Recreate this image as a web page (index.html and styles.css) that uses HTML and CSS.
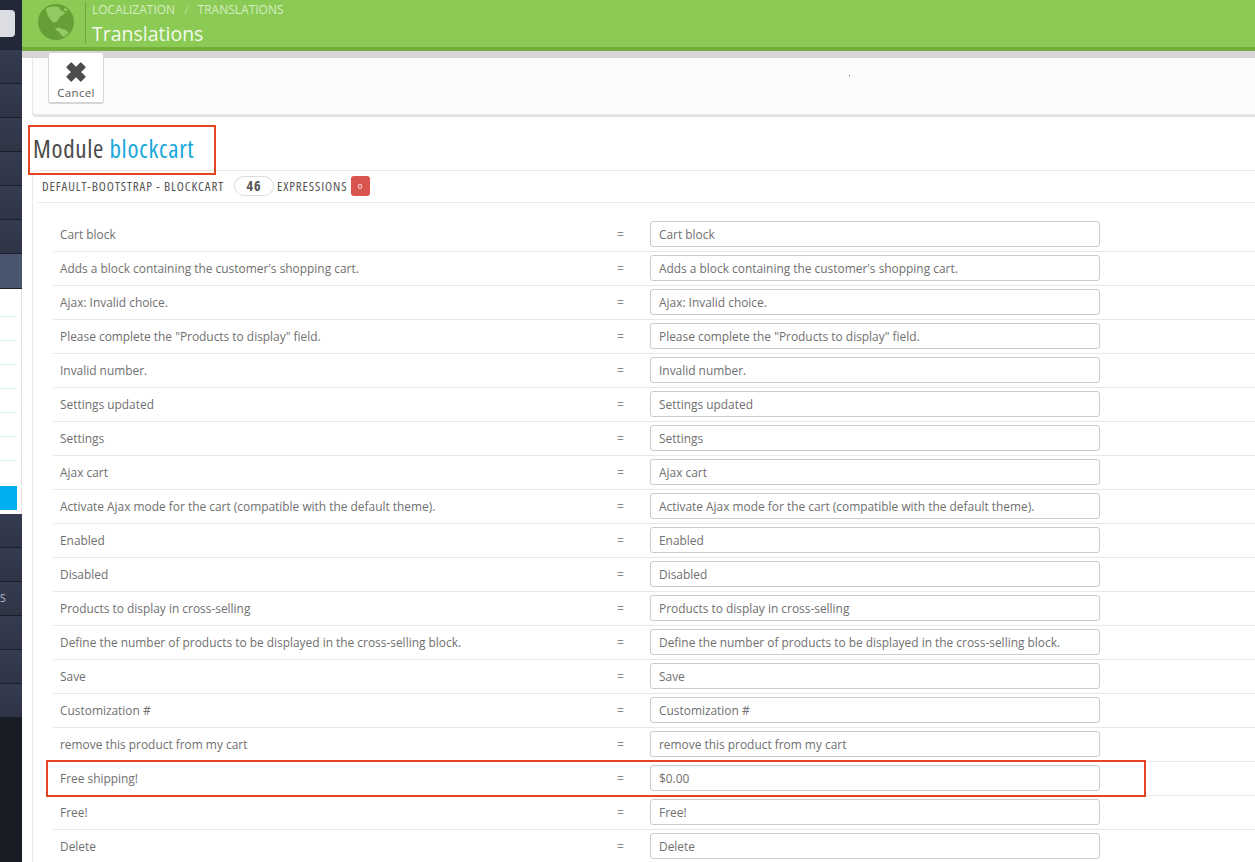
FILE: index.html
```html
<!DOCTYPE html>
<html lang="en">
<head>
<meta charset="utf-8">
<title>Translations</title>
<link rel="stylesheet" href="styles.css">
</head>
<body>
<div class="app">
  <nav class="sidebar">
    <div class="side-top"><div class="side-search"></div></div>
    <div class="side-item"></div>
    <div class="side-item"></div>
    <div class="side-item"></div>
    <div class="side-item"></div>
    <div class="side-item"></div>
    <div class="side-item"></div>
    <div class="side-item side-active"></div>
    <div class="side-sub">
      <div class="sub-item sub-first"></div>
      <div class="sub-item"></div>
      <div class="sub-item"></div>
      <div class="sub-item"></div>
      <div class="sub-item"></div>
      <div class="sub-item"></div>
      <div class="sub-item"></div>
      <div class="sub-current"></div>
    </div>
    <div class="side-item"></div>
    <div class="side-item"></div>
    <div class="side-item side-label">S</div>
    <div class="side-item"></div>
    <div class="side-item"></div>
    <div class="side-item"></div>
    <div class="side-foot"></div>
  </nav>
  <main class="main">
    <header class="page-head">
      <svg class="globe" viewBox="0 0 36 36" width="36" height="36" aria-hidden="true">
        <circle cx="18" cy="18" r="18" fill="#659f35"/>
        <path d="M8 4.5C12 2.5 17 2 21 3.2L22 5.5 27.5 8.5 25 11 22 12.5 20.5 15.5 18.5 18 15 18.8 12.5 15.5 10 12 8.5 8Z" fill="#93ca62"/>
        <path d="M17 24.3L21 23.5 24 24.8 28 26 31 29 26 33 23.5 31.5 21.5 28.5 18.5 26.5Z" fill="#93ca62"/>
        <path d="M27 3.8L30 6 28 7.5 25.5 5.5Z" fill="#93ca62"/>
      </svg>
      <div class="head-text">
        <div class="crumbs"><span>LOCALIZATION</span><span class="crumb-sep">/</span><span>TRANSLATIONS</span></div>
        <h1 class="page-title">Translations</h1>
      </div>
    </header>
    <section class="toolbar">
      <button class="cancel" type="button">
        <svg viewBox="2 2 16 16" width="20" height="20" aria-hidden="true"><path d="M2.8 6.2L6.2 2.8 10 6.6 13.8 2.8 17.2 6.2 13.4 10 17.2 13.8 13.8 17.2 10 13.4 6.2 17.2 2.8 13.8 6.6 10Z" fill="#4d4d4d" stroke="#4d4d4d" stroke-width="1" stroke-linejoin="round"/></svg>
        <span>Cancel</span>
      </button>
      <i class="speck"></i>
    </section>
    <h2 class="module-title">Module <span class="module-name">blockcart</span></h2>
    <section class="panel">
      <div class="panel-head">
        <span class="panel-name">DEFAULT-BOOTSTRAP - BLOCKCART</span>
        <span class="pill">46</span>
        <span class="panel-name">EXPRESSIONS</span>
        <span class="badge">0</span>
      </div>
      <div class="rows">
        <div class="row"><label class="row-label">Cart block</label><span class="row-eq">=</span><input class="row-input" value="Cart block"></div>
        <div class="row"><label class="row-label">Adds a block containing the customer's shopping cart.</label><span class="row-eq">=</span><input class="row-input" value="Adds a block containing the customer's shopping cart."></div>
        <div class="row"><label class="row-label">Ajax: Invalid choice.</label><span class="row-eq">=</span><input class="row-input" value="Ajax: Invalid choice."></div>
        <div class="row"><label class="row-label">Please complete the "Products to display" field.</label><span class="row-eq">=</span><input class="row-input" value="Please complete the &quot;Products to display&quot; field."></div>
        <div class="row"><label class="row-label">Invalid number.</label><span class="row-eq">=</span><input class="row-input" value="Invalid number."></div>
        <div class="row"><label class="row-label">Settings updated</label><span class="row-eq">=</span><input class="row-input" value="Settings updated"></div>
        <div class="row"><label class="row-label">Settings</label><span class="row-eq">=</span><input class="row-input" value="Settings"></div>
        <div class="row"><label class="row-label">Ajax cart</label><span class="row-eq">=</span><input class="row-input" value="Ajax cart"></div>
        <div class="row"><label class="row-label">Activate Ajax mode for the cart (compatible with the default theme).</label><span class="row-eq">=</span><input class="row-input" value="Activate Ajax mode for the cart (compatible with the default theme)."></div>
        <div class="row"><label class="row-label">Enabled</label><span class="row-eq">=</span><input class="row-input" value="Enabled"></div>
        <div class="row"><label class="row-label">Disabled</label><span class="row-eq">=</span><input class="row-input" value="Disabled"></div>
        <div class="row"><label class="row-label">Products to display in cross-selling</label><span class="row-eq">=</span><input class="row-input" value="Products to display in cross-selling"></div>
        <div class="row"><label class="row-label">Define the number of products to be displayed in the cross-selling block.</label><span class="row-eq">=</span><input class="row-input" value="Define the number of products to be displayed in the cross-selling block."></div>
        <div class="row"><label class="row-label">Save</label><span class="row-eq">=</span><input class="row-input" value="Save"></div>
        <div class="row"><label class="row-label">Customization #</label><span class="row-eq">=</span><input class="row-input" value="Customization #"></div>
        <div class="row"><label class="row-label">remove this product from my cart</label><span class="row-eq">=</span><input class="row-input" value="remove this product from my cart"></div>
        <div class="row"><label class="row-label">Free shipping!</label><span class="row-eq">=</span><input class="row-input" value="$0.00"></div>
        <div class="row"><label class="row-label">Free!</label><span class="row-eq">=</span><input class="row-input" value="Free!"></div>
        <div class="row"><label class="row-label">Delete</label><span class="row-eq">=</span><input class="row-input" value="Delete"></div>
      </div>
    </section>
  </main>
  <div class="mark mark-title"></div>
  <div class="mark mark-row"></div>
</div>
</body>
</html>
```

FILE: styles.css
```css
* { box-sizing: border-box; }
html, body { margin: 0; padding: 0; background: #fff; }
body { font-family: "Open Sans", "Liberation Sans", sans-serif; color: #666; }

.app {
  position: relative;
  display: grid;
  grid-template-columns: 22px 1fr;
  width: 1255px;
  height: 862px;
  overflow: hidden;
}

/* sidebar */
.sidebar { display: flex; flex-direction: column; height: 862px; background: #191c25; overflow: hidden; }
.side-top { height: 50px; flex: none; padding-top: 10px; background: #232838; }
.side-search { width: 15px; height: 27px; background: #dcdde3; border-radius: 0 4px 4px 0; }
.side-item {
  height: 34px;
  flex: none;
  background: linear-gradient(#363c50, #2f3546);
  border-bottom: 1px solid #1c1f2a;
}
.side-active { height: 35px; background: #4a5570; border-bottom-color: #1c1f2a; }
.side-label { font-size: 10.5px; line-height: 32px; color: #b9bdc9; }
.side-sub {
  height: 225px;
  flex: none;
  display: flex;
  flex-direction: column;
  padding-right: 4px;
  background: #fff;
  border-right: 1px solid #e4e4e4;
}
.sub-item { height: 24px; flex: none; border-bottom: 1px solid #d9eff7; }
.sub-first { height: 28px; }
.sub-current { height: 24px; flex: none; margin-top: 25px; background: #00aff0; }
.side-foot { flex: 1; background: #191c25; }

/* main */
.main { min-width: 0; display: flex; flex-direction: column; }
.page-head {
  height: 51px;
  flex: none;
  display: flex;
  align-items: flex-start;
  padding-left: 16px;
  background: #8bcb55;
  border-bottom: 4px solid #74ad3e;
}
.globe { margin-top: 4px; flex: none; }
.head-text { margin: 2px 0 0 11px; padding-left: 6px; border-left: 1px solid #6ea63d; height: 42px; }
.crumbs { font-size: 12px; line-height: 14px; color: #d6ecc2; padding-top: 1px; }
.crumb-sep { margin: 0 9px; color: #b6dc95; }
.page-title {
  margin: 4px 0 0;
  font-family: "Open Sans", sans-serif;
  font-stretch: 88%;
  font-weight: 400;
  font-size: 19.5px;
  line-height: 26px;
  color: #f3f9ec;
}

.toolbar {
  position: relative;
  height: 66px;
  flex: none;
  background: linear-gradient(#d6d6d6 7px, transparent 7px);
}
.toolbar::after {
  content: "";
  position: absolute;
  left: 10px; right: 0; top: 7px; bottom: 0;
  background: #fbfcfe;
  border-left: 1px solid #e8e8e8;
  border-bottom: 3px solid #e4e4e4;
  border-bottom-left-radius: 4px;
}
.cancel {
  position: relative;
  z-index: 1;
  display: flex;
  flex-direction: column;
  align-items: center;
  width: 56px;
  height: 52px;
  margin: 1px 0 0 26px;
  padding: 9px 0 0;
  background: #fff;
  border: 1px solid #d5d5d5;
  border-bottom-width: 2px;
  border-radius: 3px;
  font-family: "Open Sans", sans-serif;
  font-size: 11.5px;
  color: #5a5a5a;
  letter-spacing: 0.3px;
}
.cancel span { margin-top: 3px; line-height: 15px; }
.speck { position: absolute; z-index: 1; left: 827px; top: 24px; width: 1px; height: 1px; background: #555; }

.module-title {
  height: 53px;
  flex: none;
  margin: 0 0 0 11px;
  padding-top: 15px;
  font-family: "Open Sans", sans-serif;
  font-stretch: 85%;
  font-weight: 400;
  font-size: 25px;
  letter-spacing: 0.7px;
  line-height: 32px;
  color: #4a4a4a;
}
.module-name { color: #17a7dc; }

.panel { margin-left: 10px; border-left: 1px solid #e8e8e8; border-top: 1px solid #e8e8e8; border-top-left-radius: 4px; }
.panel-head {
  height: 32px;
  display: flex;
  align-items: center;
  margin-left: 4px;
  padding-left: 5px;
  border-bottom: 1px solid #ececec;
}
.panel-name {
  font-family: "Open Sans", sans-serif;
  font-stretch: 80%;
  font-size: 13px;
  letter-spacing: 0.92px;
  line-height: 16px;
  margin-top: -2px;
  color: #555;
}
.pill {
  width: 40px;
  height: 20px;
  margin: -2px 3px 0 10px;
  border: 1px solid #dcdcdc;
  border-radius: 10px;
  text-align: center;
  font-family: "Open Sans", sans-serif;
  font-stretch: 85%;
  font-weight: 700;
  font-size: 14px;
  letter-spacing: 1px;
  line-height: 18px;
  color: #555;
}
.badge {
  width: 19px;
  height: 20px;
  margin: -1px 0 0 3px;
  border-radius: 3px;
  background: #d9534f;
  text-align: center;
  font-size: 8px;
  line-height: 20px;
  color: #fff;
}

.rows { padding: 15px 0 0 20px; }
.row {
  height: 34px;
  display: flex;
  align-items: center;
  padding-bottom: 1px;
  border-bottom: 1px solid #e8e8e8;
  padding-left: 7px;
  font-size: 11.92px;
  color: #707070;
}
.row:last-child { border-bottom-color: transparent; }
.row-label { width: 557px; flex: none; }
.row-eq { width: 33px; flex: none; color: #888; }
.row-input {
  width: 450px;
  height: 26px;
  flex: none;
  padding: 0 8px;
  border: 1px solid #ccc;
  border-radius: 3px;
  background: #fff;
  font-family: inherit;
  font-size: 11.92px;
  color: #707070;
}

/* red annotations drawn over the screenshot */
.mark { position: absolute; border: 2px solid #e2451f; pointer-events: none; }
.mark-title { left: 28px; top: 125px; width: 188px; height: 50px; }
.mark-row { left: 46px; top: 760px; width: 1100px; height: 37px; }
```
